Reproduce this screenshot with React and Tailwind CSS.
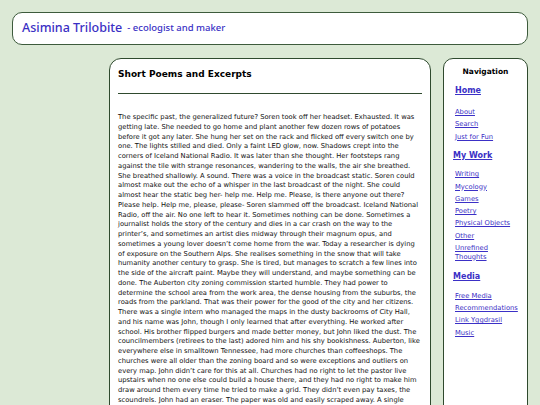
import React from "react";

const body = `The specific past, the generalized future? Soren took off her headset. Exhausted. It was getting late. She needed to go home and plant another few dozen rows of potatoes before it got any later. She hung her set on the rack and flicked off every switch one by one. The lights stilled and died. Only a faint LED glow, now. Shadows crept into the corners of Iceland National Radio. It was later than she thought. Her footsteps rang against the tile with strange resonances, wandering to the walls, the air she breathed. She breathed shallowly. A sound. There was a voice in the broadcast static. Soren could almost make out the echo of a whisper in the last broadcast of the night. She could almost hear the static beg her- help me. Help me. Please, is there anyone out there? Please help. Help me, please, please- Soren slammed off the broadcast. Iceland National Radio, off the air. No one left to hear it. Sometimes nothing can be done. Sometimes a journalist holds the story of the century and dies in a car crash on the way to the printer’s, and sometimes an artist dies midway through their magnum opus, and sometimes a young lover doesn’t come home from the war. Today a researcher is dying of exposure on the Southern Alps. She realises something in the snow that will take humanity another century to grasp. She is tired, but manages to scratch a few lines into the side of the aircraft paint. Maybe they will understand, and maybe something can be done. The Auberton city zoning commission started humble. They had power to determine the school area from the work area, the dense housing from the suburbs, the roads from the parkland. That was their power for the good of the city and her citizens. There was a single intern who managed the maps in the dusty backrooms of City Hall, and his name was John, though I only learned that after everything. He worked after school. His brother flipped burgers and made better money, but John liked the dust. The councilmembers (retirees to the last) adored him and his shy bookishness. Auberton, like everywhere else in smalltown Tennessee, had more churches than coffeeshops. The churches were all older than the zoning board and so were exceptions and outliers on every map. John didn’t care for this at all. Churches had no right to let the pastor live upstairs when no one else could build a house there, and they had no right to make him draw around them every time he tried to make a grid. They didn’t even pay taxes, the scoundrels. John had an eraser. The paper was old and easily scraped away. A single stroke and the church was gone from the map, and nobody noticed for a very long time.`;

const linkCls = "text-[#3b30c6] underline";

function Item({ children }) {
  return (
    <li className="text-[6.75px] leading-[8.75px]">
      <a href="#" className={linkCls}>{children}</a>
    </li>
  );
}

export default function App() {
  return (
    <div className="min-h-screen bg-[#dce9d6] p-[12px] font-['DejaVu_Sans',sans-serif]">
      <header className="flex h-[33px] items-center rounded-[10px] border-[1.5px] border-[#3d5b3c] bg-white pl-[9px]">
        <span className="font-['Noto_Sans',sans-serif] text-[12.5px] font-medium text-[#3a2fc4]">Asimina Trilobite</span>
        <span className="ml-[5px] font-['Noto_Sans',sans-serif] text-[9.5px] font-medium text-[#3a2fc4]">- ecologist and maker</span>
      </header>
      <div className="mt-[13px] grid grid-cols-[85px_1fr_85px] gap-[12px]">
        <div></div>
        <main className="rounded-t-[12px] border-[1.5px] border-[#2f4a2e] bg-white px-[8px] pt-[9px] pb-[40px]">
          <h2 className="text-[9px] font-bold leading-[13px] text-black">Short Poems and Excerpts</h2>
          <hr className="mt-[12px] border-t-[1.5px] border-[#2f4a2e]" />
          <p className="mt-[19px] text-[6.75px] leading-[9.75px] text-[#111]">{body}</p>
        </main>
        <nav className="rounded-t-[10px] border-[1.5px] border-[#2f4a2e] bg-white pt-[8px]">
          <div className="text-center text-[7.5px] font-bold leading-[9px] text-black">Navigation</div>
          <div className="pl-[11px] pr-[7px]">
            <div className="mt-[9.5px] text-[8px] font-bold leading-[10px]"><a href="#" className={linkCls}>Home</a></div>
            <ul className="mt-[12.5px] flex flex-col gap-[3.5px]">
              <Item>About</Item>
              <Item>Search</Item>
              <Item>Just for Fun</Item>
            </ul>
            <div className="-ml-[2px] mt-[9.5px] text-[8px] font-bold leading-[10px]"><a href="#" className={linkCls}>My Work</a></div>
            <ul className="mt-[9.5px] flex flex-col gap-[3.5px]">
              <Item>Writing</Item>
              <Item>Mycology</Item>
              <Item>Games</Item>
              <Item>Poetry</Item>
              <Item>Physical Objects</Item>
              <Item>Other</Item>
              <Item>Unrefined Thoughts</Item>
            </ul>
            <div className="-ml-[2px] mt-[11px] text-[8px] font-bold leading-[10px]"><a href="#" className={linkCls}>Media</a></div>
            <ul className="mt-[9.5px] flex flex-col gap-[3.5px]">
              <Item>Free Media</Item>
              <Item>Recommendations</Item>
              <Item>Link Yggdrasil</Item>
              <Item>Music</Item>
            </ul>
          </div>
        </nav>
      </div>
    </div>
  );
}
